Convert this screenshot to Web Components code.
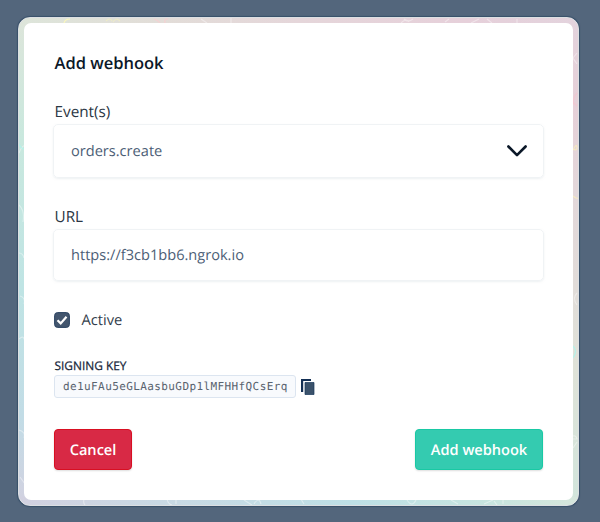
<!DOCTYPE html>
<html lang="en"><head><meta charset="utf-8"><title>Add webhook</title>
<style>html,body{margin:0;height:100%;background:#53667c;overflow:hidden}body{font-family:"Open Sans","Noto Sans",sans-serif;text-rendering:geometricPrecision;padding:17px 21px 16px 18px;box-sizing:border-box}</style></head>
<body>
<modal-frame>
  <modal-title>Add webhook</modal-title>
  <form-field label="Event(s)" select>orders.create</form-field>
  <form-field label="URL" class="url">https://f3cb1bb6.ngrok.io</form-field>
  <check-box>Active</check-box>
  <signing-key label="SIGNING KEY">de1uFAu5eGLAasbuGDp1lMFHHfQCsErq</signing-key>
  <action-button slot="footer" kind="danger">Cancel</action-button>
  <action-button slot="footer">Add webhook</action-button>
</modal-frame>
<script>
const define=(name,html,init)=>customElements.define(name,class extends HTMLElement{
  connectedCallback(){
    if(this.shadowRoot)return;
    const t=document.createElement('template');t.innerHTML=html;
    this.attachShadow({mode:'open'}).append(t.content.cloneNode(true));
    if(init)init(this,this.shadowRoot);
  }
});
define('modal-frame',`<style>
:host{display:block;box-sizing:border-box;height:489px;width:561px;padding:5px;border:1px solid #dcdfe2;border-radius:12px;box-shadow:0 0 1px 1px #38506a;position:relative;overflow:hidden;
background:linear-gradient(90deg,#dde5da 0%,#e2ddd8 25%,#e5d6da 50%,#e6d0da 80%,#e3d3dd 100%) top/100% 8px no-repeat,
linear-gradient(90deg,#d2d1e0 0%,#c9d9e4 25%,#bee0e6 60%,#c8e5df 85%,#d6e6dc 100%) bottom/100% 8px no-repeat,
linear-gradient(#dde5da 0%,#c9e8de 25%,#bfe4e4 55%,#c2dce6 82%,#d2d1e0 100%) left/50% 100% no-repeat,
linear-gradient(#e3d3dd 0%,#e6d0d8 18%,#e3d7da 35%,#e1dcd9 55%,#dfe2d8 72%,#d1e5dc 100%) right/50% 100% no-repeat}
svg.doodles{position:absolute;inset:0;width:559px;height:487px}
.panel{position:relative;box-sizing:border-box;height:477px;border-radius:7px;background:#fff;padding:25px 30px 0 30px;display:flex;flex-direction:column}
footer{display:flex;justify-content:space-between;margin-top:31px}
</style><svg class="doodles" fill="none" stroke="#fff" stroke-opacity=".4" stroke-width="1.2">
<path d="M45 5q1-4 6-4" stroke="#faf7bd" stroke-opacity="1"/>
<path d="M87 3q4-4 6 0M94 4q3-5 7-1" stroke="#f2f0c0" stroke-opacity=".7"/>
<path d="M135 1q4 1 6 4M146 5q-1-5 3-4" stroke="#f6cfd2" stroke-opacity=".9"/>
<path d="M182 1l6 4M212 0v6M382 5q5-5 8-1M385 1q4 4 9 0M426 4l4-3M452 5l8-4M468 1l5 4M498 1v5"/>
<path d="M0 135q3-8 7-8M0 187q6 6 4 17M0 235q4 0 5 5M1 278q6 2 4 8M0 321q5-5 6 3M0 412q7 2 5 8M1 459l5 7"/>
<path d="M0 126q3 6 6 5M554 328q5 5 0 12" stroke="#b5f2ea" stroke-opacity="1"/>
<path d="M558 35l-4 5 4 6M554 430l4-6"/>
<path d="M554 87q0-8 4-12M554 84l4 4" stroke="#f3c6d0" stroke-opacity=".8"/>
<path d="M554 132q4-8 4-2q0 3-4 1M554 178q3 3 5 2" stroke="#f5eac0" stroke-opacity=".9"/>
<path d="M558 275q-5 5 0 12M554 421h4q-1-4-4-3"/>
<path d="M65 481q-1 4 1 6M148 481q1 5 5 6M157 486v-5M225 482l8 5M235 486q5-8 7 0M285 486q-2-3-3-5M388 482q5 8 9 0M432 482l7 4M465 486l9-4M475 483l3 4M484 481v5"/></svg>
<div class="panel"><slot></slot><footer><slot name="footer"></slot></footer></div>`);
define('modal-title',`<style>:host{display:block;padding-left:.5px;font-weight:600;font-size:16.5px;line-height:30px;color:#0c1828}</style><slot></slot>`);
define('form-field',`<style>
:host{display:block;margin-top:23px;width:490px}
:host(.url){margin-top:28px;--h:49px}
label{display:block;padding-left:.5px;font-size:15.3px;line-height:22px;color:#2b3644;margin-bottom:1px}
.box{box-sizing:border-box;height:calc(var(--h,51px) + 3px);width:491px;margin-left:-1px;border:1px solid #f0f3f5;border-radius:5px;box-shadow:0 1px 2px #dde3e880;padding:0 16.5px 0 17px;display:flex;align-items:center;justify-content:space-between;font-size:14.6px;color:#4c5e76}
svg{width:20px;height:12px;margin-top:-1px}
</style><label></label><div class="box"><slot></slot></div>`,(el,r)=>{
  r.querySelector('label').textContent=el.getAttribute('label');
  if(el.hasAttribute('select'))r.querySelector('.box').insertAdjacentHTML('beforeend','<svg viewBox="0 0 20 12" fill="none" stroke="#0b1828" stroke-width="2.6" stroke-linecap="round" stroke-linejoin="round"><path d="M1.4 1.5L10 10.2 18.6 1.5"/></svg>');
});
define('check-box',`<style>:host{display:flex;align-items:center;gap:11.5px;margin-top:28px;height:22px;font-size:14.7px;color:#333e4c}svg{display:block;width:16px;height:16px}</style>
<svg viewBox="0 0 16 16"><rect x=".6" y=".6" width="14.8" height="14.8" rx="3" fill="#43566e" stroke="#2b4463"/><path d="M3.5 8.2l3.2 3.2L12.5 4.8" fill="none" stroke="#fff" stroke-width="2.2"/></svg><slot></slot>`);
define('signing-key',`<style>:host{display:block;margin-top:26px}
label{display:block;padding-left:.5px;font-size:11.9px;-webkit-text-stroke:.25px #17263a;line-height:18px;color:#17263a}
.row{display:flex;align-items:center;gap:5px}
code{box-sizing:border-box;height:23px;width:242px;padding:0 8px;border:1px solid #dce5f0;border-radius:3px;background:#f8fafd;color:#59636f;font:11px/21px "DejaVu Sans Mono","Liberation Mono",monospace;letter-spacing:.4px;white-space:nowrap}
svg{width:14px;height:16px}</style>
<label></label><div class="row"><code><slot></slot></code><svg viewBox="0 0 14 16"><path d="M0 0h10v2H2.2v11H0z" fill="#132f54"/><path d="M4 3.5h9v12H4z" fill="#3b526b" stroke="#17365a" stroke-width=".7"/></svg></div>`,(el,r)=>r.querySelector('label').textContent=el.getAttribute('label'));
define('action-button',`<style>:host{display:block}
button{display:block;box-sizing:border-box;height:41px;width:128px;padding:0;border:1px solid #19c9a4;border-radius:4px;background:#34cbb0;color:#fff;font:600 14.6px "Open Sans","Noto Sans",sans-serif;text-rendering:geometricPrecision;box-shadow:0 1px 2px #0002}
:host([kind=danger]) button{width:78px;background:#d82945;border-color:#d80f22}</style><button><slot></slot></button>`);
</script></body></html>
